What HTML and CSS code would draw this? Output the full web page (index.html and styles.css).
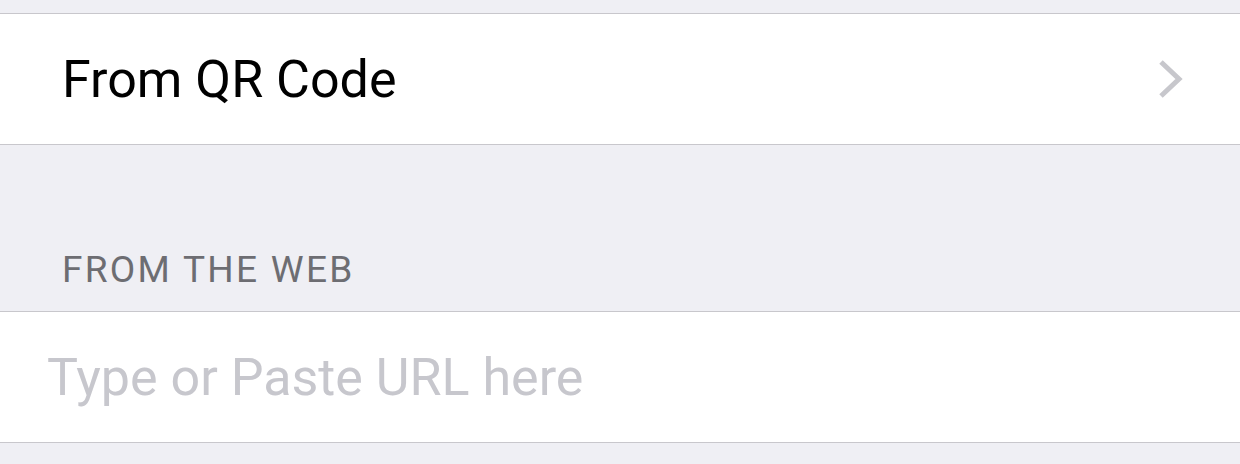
FILE: index.html
```html
<!DOCTYPE html>
<html lang="en">
<head>
    <meta charset="UTF-8">
    <title>Add Source</title>
    <link rel="stylesheet" href="styles.css">
</head>
<body>
    <div class="top-gap"></div>
    <div class="group">
        <div class="cell">
            <span class="cell-label">From QR Code</span>
            <svg class="chevron" width="26" height="40" viewBox="0 0 26 40">
                <path d="M3 3 L21 20 L3 37" fill="none" stroke="#c7c7cc" stroke-width="5"/>
            </svg>
        </div>
    </div>
    <div class="section-header">FROM THE WEB</div>
    <div class="group">
        <div class="cell">
            <input class="url-input" type="text" placeholder="Type or Paste URL here">
        </div>
    </div>
</body>
</html>
```

FILE: styles.css
```css
body {
    margin: 0;
    background-color: #efeff4;
    font-family: Roboto, "Liberation Sans", sans-serif;
}
.top-gap {
    height: 13px;
}
.group {
    background-color: #fff;
    border-top: 1px solid #c8c7cc;
    border-bottom: 1px solid #c8c7cc;
}
.cell {
    height: 130px;
    display: flex;
    align-items: center;
    justify-content: space-between;
    padding: 0 56px 0 62px;
}
.cell-label {
    font-size: 52px;
    color: #000;
}
.chevron {
    display: block;
}
.section-header {
    height: 166px;
    box-sizing: border-box;
    display: flex;
    align-items: flex-end;
    padding: 0 0 20px 62px;
    font-size: 37px;
    color: #6d6d72;
    letter-spacing: 2.3px;
}
.url-input {
    width: 100%;
    border: none;
    outline: none;
    padding: 0;
    margin-left: -15px;
    font-family: Roboto, "Liberation Sans", sans-serif;
    font-size: 52px;
    color: #000;
    background: transparent;
}
.url-input::placeholder {
    color: #c7c7cd;
}
```
